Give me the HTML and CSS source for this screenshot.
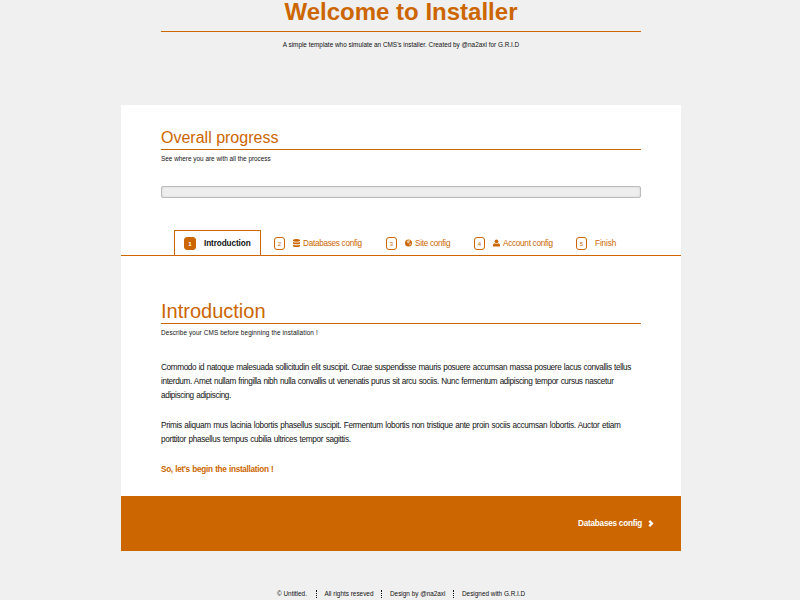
FILE: index.html
```html
<!DOCTYPE html>
<html lang="en">
<head>
<meta charset="utf-8">
<title>Installer</title>
<link rel="stylesheet" href="styles.css">
</head>
<body>
<header class="masthead">
  <h1>Welcome to Installer</h1>
  <p class="tagline">A simple template who simulate an CMS's installer. Created by @na2axl for G.R.I.D</p>
</header>
<main class="panel">
  <section class="overall">
    <h2>Overall progress</h2>
    <p class="note">See where you are with all the process</p>
    <div class="progress"></div>
  </section>
  <nav class="tabs">
    <a class="tab active"><span class="num">1</span><span class="label">Introduction</span></a>
    <a class="tab databases"><span class="num">2</span><svg class="icon" viewBox="0 0 14 16"><path d="M0 2Q1 0 7 0t7 2v2Q13 5.500 7 5.500T0 4zM0 6q2 1.200 7 1.200T14 6v3q0 1.700-7 1.700T0 9zM0 11.300q2 1.200 7 1.200t7-1.200V14q0 2-7 2t-7-2z"/></svg><span class="label">Databases config</span></a>
    <a class="tab site"><span class="num">3</span><svg class="icon" viewBox="0 0 14 14"><circle cx="7" cy="7" r="7"/><path class="land" d="M5 2l4-1 2 2-2 2-1 3-3-1-2-3zM9 8l3-1-1 4-3 1z"/></svg><span class="label">Site config</span></a>
    <a class="tab account"><span class="num">4</span><svg class="icon" viewBox="0 0 14 14"><circle cx="7" cy="3.700" r="3.700"/><path d="M0 14v-3q0-3 3.500-3.500Q7 9.500 10.500 7.500 14 8 14 11v3z"/></svg><span class="label">Account config</span></a>
    <a class="tab finish"><span class="num">5</span><span class="label">Finish</span></a>
  </nav>
  <section class="content">
    <h2>Introduction</h2>
    <p class="note intro-note">Describe your CMS before beginning the installation !</p>
    <div class="copy">
      <p>Commodo id natoque malesuada sollicitudin elit suscipit. Curae suspendisse mauris posuere accumsan massa posuere lacus convallis tellus<br>interdum. Amet nullam fringilla nibh nulla convallis ut venenatis purus sit arcu sociis. Nunc fermentum adipiscing tempor cursus nascetur<br>adipiscing adipiscing.</p>
      <p class="second">Primis aliquam mus lacinia lobortis phasellus suscipit. Fermentum lobortis non tristique ante proin sociis accumsan lobortis. Auctor etiam<br>porttitor phasellus tempus cubilia ultrices tempor sagittis.</p>
      <p class="begin">So, let's begin the installation !</p>
    </div>
  </section>
  <div class="actions"><a class="next">Databases config<svg viewBox="0 0 10 12"><path d="M2 1.500l4.500 4.500L2 10.500"/></svg></a></div>
</main>
<footer class="legal"><span>© Untitled.</span><span>All rights reseved</span><span>Design by @na2axl</span><span>Designed with G.R.I.D</span></footer>
</body>
</html>
```
FILE: styles.css
```css
* { box-sizing: border-box; }
html { overflow: hidden; }
body {
  margin: 0;
  height: 600px;
  overflow: hidden;
  background: #f0f0f0;
  color: #111;
  font: 8.2px/14px "Liberation Sans", Arial, sans-serif;
}
h1, h2, p { margin: 0; }
h1, h2 { color: #c60; border-bottom: 1px solid #c60; }
h2 { font-weight: 400; }
.masthead { width: 480px; height: 105px; margin-left: 161px; text-align: center; }
h1 { height: 32px; font-size: 24px; line-height: 24px; }
.tagline { padding-top: 8px; font-size: 6.4px; line-height: 10px; }
.panel { width: 560px; margin-left: 121px; background: #fff; }
.overall { height: 125px; padding: 22px 40px 0; }
.overall h2 { height: 23px; font-size: 16px; line-height: 22px; }
.note { font-size: 6.4px; line-height: 10px; padding-top: 4px; }
.intro-note { letter-spacing: .11px; }
.progress {
  height: 12px;
  margin-top: 22px;
  border: 1px solid #bbb;
  border-radius: 2px;
  background: #eee;
  box-shadow: inset 0 0 2px #ccc;
}
.tabs { display: flex; height: 26px; padding-left: 53px; border-bottom: 1px solid #c60; }
.tab { display: flex; align-items: center; height: 25px; color: #c60; padding-top: 1px; white-space: nowrap; }
.label { padding-top: 2px; letter-spacing: -.28px; }
.tab.active { width: 87px; padding: 0 0 0 9px; border: 1px solid #c60; border-bottom: 0; color: #111; font-weight: 700; }
.active .label { letter-spacing: -.1px; }
.num {
  width: 11px;
  height: 13px;
  margin-right: 8px;
  border: 1px solid #c60;
  border-radius: 3px;
  font-size: 6px;
  line-height: 12px;
  text-align: center;
}
.active .num { width: 12px; background: #c60; color: #fff; }
.databases { width: 112px; padding-left: 13px; }
.site { width: 88px; padding-left: 13px; }
.account { width: 102px; padding-left: 13px; }
.finish { padding-left: 13px; }
.finish .label { letter-spacing: -.1px; }
.icon { width: 7px; height: 8px; margin-right: 3px; fill: #c60; }
.land { fill: #fff; opacity: .6; }
.content { height: 240px; padding: 44px 40px 0; }
.content h2 { height: 24px; font-size: 20px; line-height: 23px; }
.copy { padding-top: 23px; letter-spacing: -.36px; word-spacing: .5px; white-space: nowrap; }
.copy p { margin-bottom: 16px; }
.copy .second { letter-spacing: -.31px; }
.copy .begin { color: #c60; font-weight: 700; letter-spacing: -.3px; }
.actions { display: flex; align-items: center; justify-content: flex-end; height: 55px; padding-right: 27px; background: #c60; }
.next { display: flex; align-items: center; color: #fff; font-weight: 700; letter-spacing: -.24px; }
.next svg { width: 6px; height: 7px; margin-left: 6px; fill: none; stroke: #fff; stroke-width: 4; }
.legal { display: flex; margin: 39px 0 0 277px; font-size: 6.4px; line-height: 8px; white-space: nowrap; }
.legal span + span { margin-left: 8px; padding-left: 7.500px; border-left: 1px dotted #111; }
.legal span:nth-child(2) { margin-left: 9px; }
```
